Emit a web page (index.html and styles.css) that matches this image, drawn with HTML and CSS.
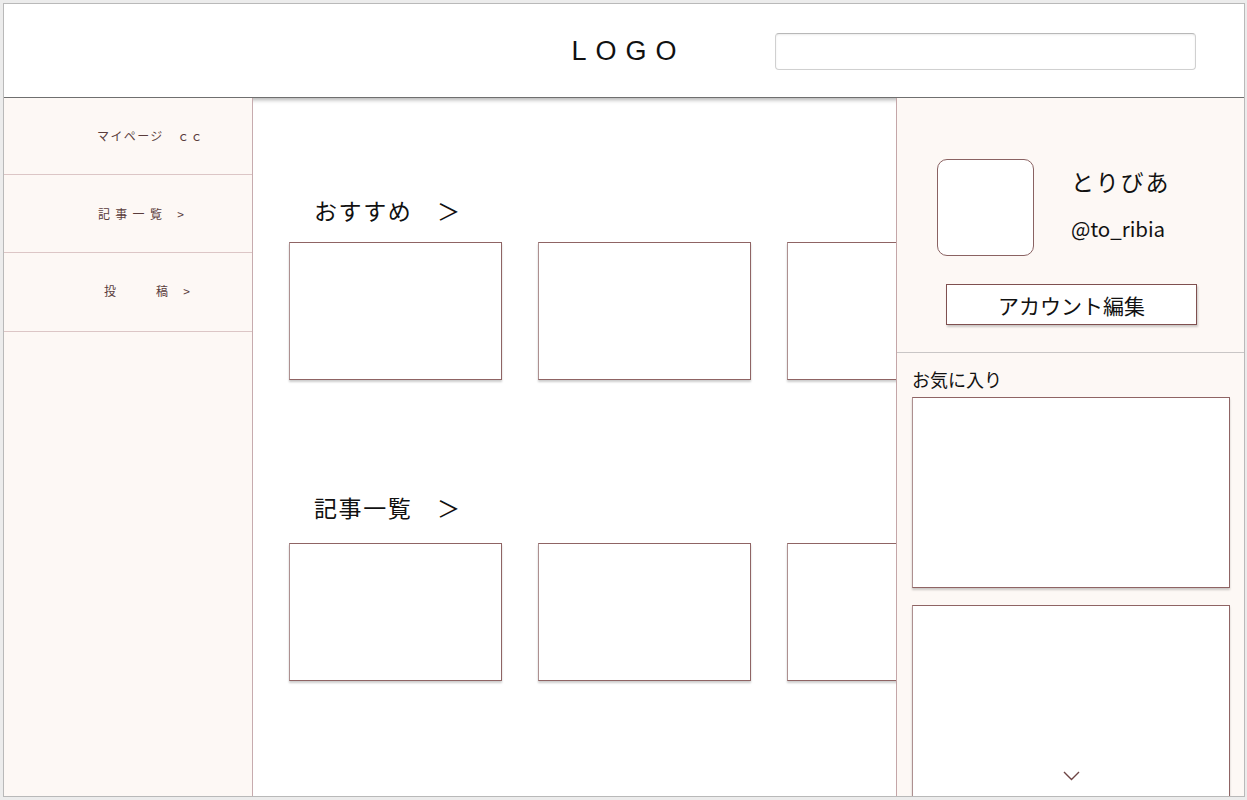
FILE: index.html
```html
<!DOCTYPE html>
<html lang="ja">
<head>
    <meta charset="UTF-8">
    <title>マイページ</title>
    <link rel="stylesheet" href="styles.css">
</head>
<body>
<div class="frame">
    <header class="topbar">
        <div class="logo">LOGO</div>
        <input class="search" type="text">
    </header>
    <div class="layout">
        <nav class="sidenav">
            <a class="nav-item nav-mypage" href="#">マイページ　ｃｃ</a>
            <a class="nav-item nav-list" href="#">記事一覧<span class="nav-arrow">&gt;</span></a>
            <a class="nav-item nav-post" href="#">投　　稿<span class="nav-arrow">&gt;</span></a>
        </nav>
        <main class="content">
            <section class="shelf">
                <h2 class="shelf-title">おすすめ　＞</h2>
                <div class="card-row">
                    <div class="card"></div>
                    <div class="card"></div>
                    <div class="card"></div>
                </div>
            </section>
            <section class="shelf shelf-list">
                <h2 class="shelf-title">記事一覧　＞</h2>
                <div class="card-row">
                    <div class="card"></div>
                    <div class="card"></div>
                    <div class="card"></div>
                </div>
            </section>
        </main>
        <aside class="panel">
            <div class="profile">
                <div class="profile-head">
                    <div class="avatar"></div>
                    <div class="profile-names">
                        <div class="profile-name">とりびあ</div>
                        <div class="profile-id">@to_ribia</div>
                    </div>
                </div>
                <button class="edit-btn">アカウント編集</button>
            </div>
            <div class="favs">
                <div class="favs-title">お気に入り</div>
                <div class="fav-card"></div>
                <div class="fav-card fav-more">
                    <svg width="17" height="10" viewBox="0 0 17 10"><polyline points="1,1 8.5,8.5 16,1" fill="none" stroke="#6e4444" stroke-width="1.4"/></svg>
                </div>
            </div>
        </aside>
    </div>
</div>
</body>
</html>
```

FILE: styles.css
```css
body{
    margin: 0;
    padding: 3px 2px 3px 3px;
    background: #ececec;
    font-family: "Noto Sans CJK JP", "Noto Sans", sans-serif;
}
.frame{
    height: 794px;
    box-sizing: border-box;
    border: 1px solid #b9b9b9;
    background: #fff;
    overflow: hidden;
    display: flex;
    flex-direction: column;
}
.topbar{
    position: relative;
    z-index: 1;
    height: 93px;
    flex-shrink: 0;
    border-bottom: 1px solid #6f6f6f;
    box-shadow: 0 2px 4px rgba(0,0,0,0.3);
    background: #fff;
    display: grid;
    grid-template-columns: 1fr auto 1fr;
    align-items: center;
}
.logo{
    grid-column: 2;
    font-family: "Liberation Sans", Arial, sans-serif;
    font-size: 27px;
    letter-spacing: 9px;
    padding-left: 9px;
    color: #111;
    margin-top: 2px;
}
.search{
    grid-column: 3;
    justify-self: end;
    margin-right: 48px;
    width: 421px;
    height: 37px;
    box-sizing: border-box;
    border: 1px solid #d0d0d0;
    border-top-color: #b8b8b8;
    border-radius: 4px;
    box-shadow: inset 0 1px 2px rgba(0,0,0,0.08);
    margin-top: 2px;
}
.layout{
    flex: 1;
    display: grid;
    grid-template-columns: 249px 1fr 348px;
    min-height: 0;
}
.sidenav{
    position: relative;
    z-index: 2;
    background: #fdf8f5;
    border-right: 1px solid #c7abae;
}
.nav-item{
    display: flex;
    align-items: center;
    box-sizing: border-box;
    height: 77px;
    border-bottom: 1px solid #dcc6c6;
    padding-left: 94px;
    font-size: 12px;
    letter-spacing: 5.3px;
    color: #5a3c3c;
    text-decoration: none;
}
.nav-arrow{
    margin-left: 10px;
}
.nav-mypage{
    padding-left: 93px;
    padding-bottom: 2px;
    letter-spacing: 1.4px;
}
.nav-list{
    height: 78px;
}
.nav-post{
    height: 79px;
    padding-left: 100px;
    padding-bottom: 4px;
}
.content{
    overflow: hidden;
    padding: 96px 0 0 36px;
}
.shelf-title{
    margin: 0 0 16px 25px;
    font-size: 23px;
    font-weight: normal;
    line-height: 32px;
    letter-spacing: 1.6px;
    color: #111;
}
.shelf-list{
    margin-top: 111px;
}
.shelf-list .shelf-title{
    margin-bottom: 20px;
}
.card-row{
    display: flex;
    gap: 36px;
}
.card{
    flex-shrink: 0;
    width: 213px;
    height: 138px;
    box-sizing: border-box;
    border: 1px solid #8f6464;
    border-left-color: #ad9090;
    box-shadow: 0 2px 2px rgba(0,0,0,0.2);
    background: #fff;
}
.panel{
    position: relative;
    z-index: 2;
    background: #fdf8f5;
    border-left: 1px solid #c4a6a8;
    overflow: hidden;
}
.profile{
    height: 255px;
    border-bottom: 1px solid #c9c6c6;
    padding: 61px 0 0 40px;
    box-sizing: border-box;
}
.profile-head{
    display: flex;
    gap: 37px;
}
.avatar{
    width: 97px;
    height: 97px;
    box-sizing: border-box;
    border: 1px solid #8a6262;
    border-radius: 10px;
    background: #fff;
}
.profile-name{
    margin-top: 6px;
    font-size: 23px;
    line-height: 32px;
    letter-spacing: 1.8px;
    color: #111;
}
.profile-id{
    margin-top: 18px;
    font-size: 20.5px;
    line-height: 26px;
    color: #111;
}
.edit-btn{
    display: block;
    margin: 28px 0 0 9px;
    width: 251px;
    height: 41px;
    box-sizing: border-box;
    border: 1px solid #7f5050;
    background: #fff;
    box-shadow: 1px 2px 2px rgba(0,0,0,0.2);
    font-family: inherit;
    font-size: 21px;
    color: #111;
    padding: 0;
}
.favs{
    padding: 14px 14px 0 15px;
}
.favs-title{
    font-size: 18px;
    line-height: 24px;
    color: #111;
    margin-bottom: 6px;
}
.fav-card{
    height: 191px;
    box-sizing: border-box;
    border: 1px solid #8f6464;
    border-left-color: #ad9090;
    box-shadow: 0 2px 2px rgba(0,0,0,0.2);
    background: #fff;
    margin-bottom: 17px;
}
.fav-more{
    height: 196px;
    display: flex;
    justify-content: center;
    align-items: flex-end;
    padding-bottom: 19px;
}
```
